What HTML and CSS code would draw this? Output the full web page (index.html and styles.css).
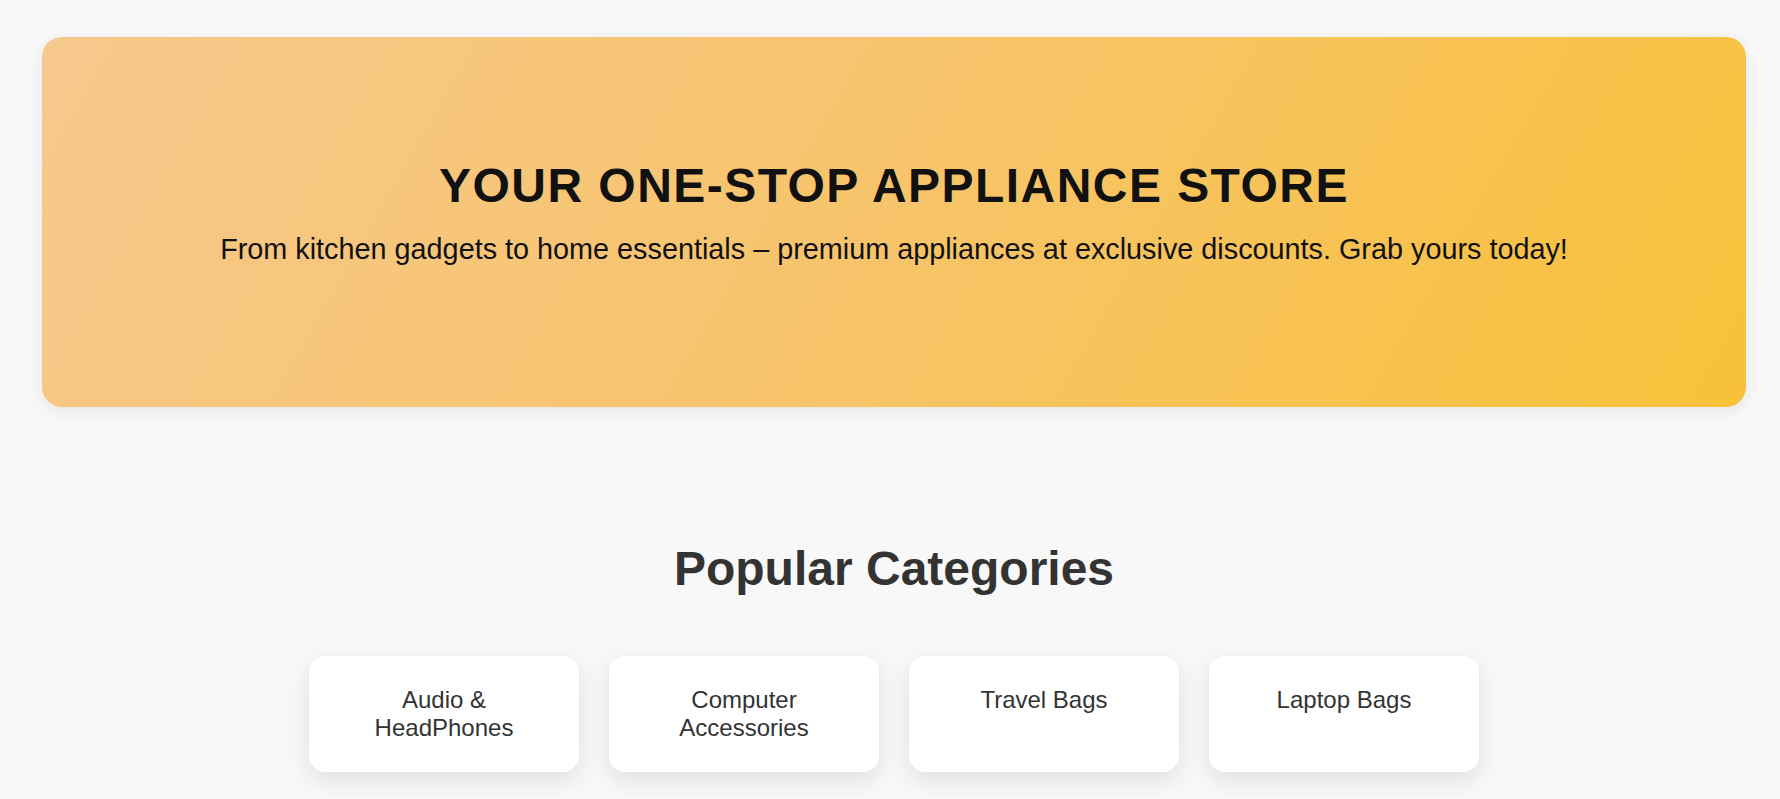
FILE: index.html
```html
<!DOCTYPE html>
<html lang="en">
<head>
<meta charset="utf-8">
<title>Appliance Store</title>
<link rel="stylesheet" href="styles.css">
</head>
<body>
  <section class="hero">
    <h1 class="hero-title">YOUR ONE-STOP APPLIANCE STORE</h1>
    <p class="hero-sub">From kitchen gadgets to home essentials – premium appliances at exclusive discounts. Grab yours today!</p>
  </section>

  <section class="categories">
    <h2 class="categories-title">Popular Categories</h2>
    <div class="category-grid">
      <div class="category-card">Audio &amp; HeadPhones</div>
      <div class="category-card">Computer Accessories</div>
      <div class="category-card">Travel Bags</div>
      <div class="category-card">Laptop Bags</div>
    </div>
  </section>
</body>
</html>
```

FILE: styles.css
```css
html, body {
  margin: 0;
  padding: 0;
}

body {
  background: #f8f8f8;
  font-family: "Liberation Sans", Arial, sans-serif;
  padding-left: 8px;
  padding-top: 37px;
}

.hero {
  margin: 0 34px;
  border-radius: 20px;
  background: linear-gradient(120deg, #f6c88d 0%, #f7c46a 50%, #f8c139 100%);
  box-shadow: 0 4px 16px rgba(0, 0, 0, 0.08);
  padding: 121px 20px 141px;
  text-align: center;
  color: #111;
}

.hero-title {
  margin: 0 0 20px;
  font-size: 48px;
  font-weight: 700;
  letter-spacing: 1.45px;
  line-height: normal;
}

.hero-sub {
  margin: 0;
  font-size: 28.8px;
  line-height: normal;
}

.categories {
  padding-top: 134px;
  padding-bottom: 26px;
  text-align: center;
}

.categories-title {
  margin: 0 0 60px;
  font-size: 48px;
  font-weight: 700;
  color: #333;
  line-height: normal;
}

.category-grid {
  display: flex;
  justify-content: center;
  gap: 30px;
}

.category-card {
  width: 270px;
  box-sizing: border-box;
  padding: 30px 24px;
  background: #fff;
  border-radius: 16px;
  box-shadow: 0 8px 24px rgba(0, 0, 0, 0.1);
  font-size: 24px;
  line-height: 28px;
  color: #333;
  text-align: center;
}
```
